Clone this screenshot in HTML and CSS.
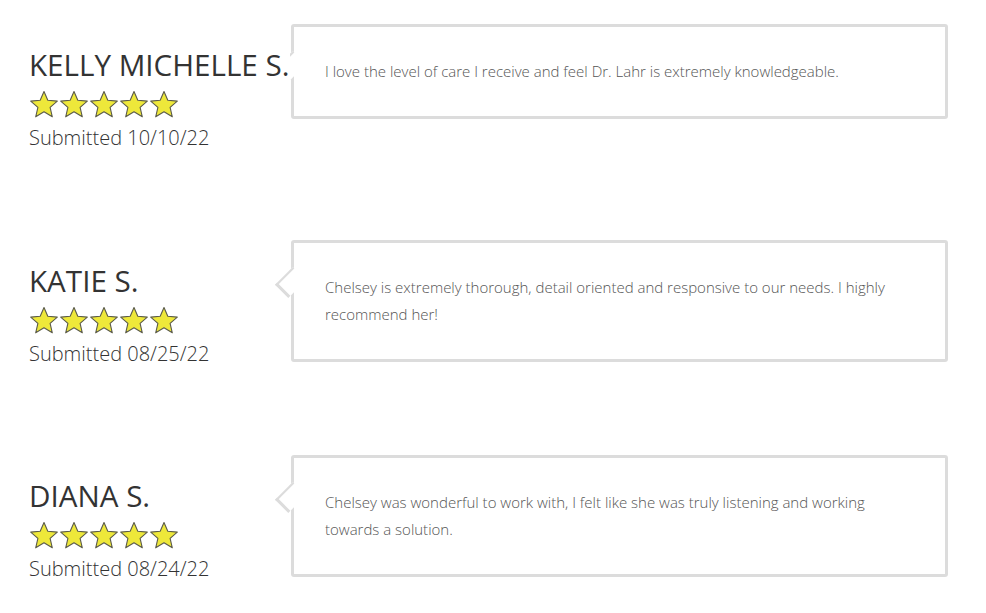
FILE: index.html
```html
<!DOCTYPE html>
<html>
<head>
<meta charset="utf-8">
<link rel="stylesheet" href="styles.css">
</head>
<body>
<div class="reviews">
  <div class="review">
    <div class="author">
      <div class="name"><span>KELLY MICHELLE S.</span></div>
      <div class="stars">
        <svg viewBox="0 0 30 29" class="star"><path d="M15 1.5 L18.8 10.3 L28.3 11.1 L21.1 17.4 L23.3 26.8 L15 21.8 L6.7 26.8 L8.9 17.4 L1.7 11.1 L11.2 10.3 Z"/></svg>
        <svg viewBox="0 0 30 29" class="star"><path d="M15 1.5 L18.8 10.3 L28.3 11.1 L21.1 17.4 L23.3 26.8 L15 21.8 L6.7 26.8 L8.9 17.4 L1.7 11.1 L11.2 10.3 Z"/></svg>
        <svg viewBox="0 0 30 29" class="star"><path d="M15 1.5 L18.8 10.3 L28.3 11.1 L21.1 17.4 L23.3 26.8 L15 21.8 L6.7 26.8 L8.9 17.4 L1.7 11.1 L11.2 10.3 Z"/></svg>
        <svg viewBox="0 0 30 29" class="star"><path d="M15 1.5 L18.8 10.3 L28.3 11.1 L21.1 17.4 L23.3 26.8 L15 21.8 L6.7 26.8 L8.9 17.4 L1.7 11.1 L11.2 10.3 Z"/></svg>
        <svg viewBox="0 0 30 29" class="star"><path d="M15 1.5 L18.8 10.3 L28.3 11.1 L21.1 17.4 L23.3 26.8 L15 21.8 L6.7 26.8 L8.9 17.4 L1.7 11.1 L11.2 10.3 Z"/></svg>
      </div>
      <div class="date">Submitted 10/10/22</div>
    </div>
    <div class="bubble">
      <p>I love the level of care I receive and feel Dr. Lahr is extremely knowledgeable.</p>
    </div>
  </div>
  <div class="review">
    <div class="author">
      <div class="name"><span>KATIE S.</span></div>
      <div class="stars">
        <svg viewBox="0 0 30 29" class="star"><path d="M15 1.5 L18.8 10.3 L28.3 11.1 L21.1 17.4 L23.3 26.8 L15 21.8 L6.7 26.8 L8.9 17.4 L1.7 11.1 L11.2 10.3 Z"/></svg>
        <svg viewBox="0 0 30 29" class="star"><path d="M15 1.5 L18.8 10.3 L28.3 11.1 L21.1 17.4 L23.3 26.8 L15 21.8 L6.7 26.8 L8.9 17.4 L1.7 11.1 L11.2 10.3 Z"/></svg>
        <svg viewBox="0 0 30 29" class="star"><path d="M15 1.5 L18.8 10.3 L28.3 11.1 L21.1 17.4 L23.3 26.8 L15 21.8 L6.7 26.8 L8.9 17.4 L1.7 11.1 L11.2 10.3 Z"/></svg>
        <svg viewBox="0 0 30 29" class="star"><path d="M15 1.5 L18.8 10.3 L28.3 11.1 L21.1 17.4 L23.3 26.8 L15 21.8 L6.7 26.8 L8.9 17.4 L1.7 11.1 L11.2 10.3 Z"/></svg>
        <svg viewBox="0 0 30 29" class="star"><path d="M15 1.5 L18.8 10.3 L28.3 11.1 L21.1 17.4 L23.3 26.8 L15 21.8 L6.7 26.8 L8.9 17.4 L1.7 11.1 L11.2 10.3 Z"/></svg>
      </div>
      <div class="date">Submitted 08/25/22</div>
    </div>
    <div class="bubble">
      <p>Chelsey is extremely thorough, detail oriented and responsive to our needs. I highly recommend her!</p>
    </div>
  </div>
  <div class="review">
    <div class="author">
      <div class="name"><span>DIANA S.</span></div>
      <div class="stars">
        <svg viewBox="0 0 30 29" class="star"><path d="M15 1.5 L18.8 10.3 L28.3 11.1 L21.1 17.4 L23.3 26.8 L15 21.8 L6.7 26.8 L8.9 17.4 L1.7 11.1 L11.2 10.3 Z"/></svg>
        <svg viewBox="0 0 30 29" class="star"><path d="M15 1.5 L18.8 10.3 L28.3 11.1 L21.1 17.4 L23.3 26.8 L15 21.8 L6.7 26.8 L8.9 17.4 L1.7 11.1 L11.2 10.3 Z"/></svg>
        <svg viewBox="0 0 30 29" class="star"><path d="M15 1.5 L18.8 10.3 L28.3 11.1 L21.1 17.4 L23.3 26.8 L15 21.8 L6.7 26.8 L8.9 17.4 L1.7 11.1 L11.2 10.3 Z"/></svg>
        <svg viewBox="0 0 30 29" class="star"><path d="M15 1.5 L18.8 10.3 L28.3 11.1 L21.1 17.4 L23.3 26.8 L15 21.8 L6.7 26.8 L8.9 17.4 L1.7 11.1 L11.2 10.3 Z"/></svg>
        <svg viewBox="0 0 30 29" class="star"><path d="M15 1.5 L18.8 10.3 L28.3 11.1 L21.1 17.4 L23.3 26.8 L15 21.8 L6.7 26.8 L8.9 17.4 L1.7 11.1 L11.2 10.3 Z"/></svg>
      </div>
      <div class="date">Submitted 08/24/22</div>
    </div>
    <div class="bubble">
      <p>Chelsey was wonderful to work with, I felt like she was truly listening and working towards a solution.</p>
    </div>
  </div>
</div>
</body>
</html>
```

FILE: styles.css
```css
html, body {
  margin: 0;
  padding: 0;
  background: #fff;
}
body {
  font-family: "Open Sans", "Liberation Sans", sans-serif;
  color: #333;
}
.reviews {
  display: flex;
  flex-direction: column;
  padding: 24px 0 0 29px;
}
.review {
  display: flex;
  height: 215.5px;
  align-items: flex-start;
}
.author {
  width: 262px;
  flex: none;
  white-space: nowrap;
  overflow-x: clip;
  margin-top: 20px;
}
.name {
  font-size: 29.6px;
  line-height: 42px;
  color: #333;
}
.name span {
  position: relative;
  z-index: 1;
  background: #fff;
}
.stars {
  display: flex;
  margin-top: 4px;
  height: 29px;
}
.star {
  width: 30px;
  height: 29px;
  display: block;
}
.star path {
  fill: #eee83a;
  stroke: #5a5a4a;
  stroke-width: 1.1;
  stroke-linejoin: round;
}
.date {
  font-size: 20px;
  line-height: 28px;
  font-weight: 300;
  margin-top: 5px;
  color: #333;
}
.bubble {
  position: relative;
  width: 657px;
  flex: none;
  box-sizing: border-box;
  border: 3px solid #dcdcdc;
  border-radius: 3px;
  background: #fff;
  padding: 31px 30px 31px 31px;
}
.bubble::before {
  content: "";
  position: absolute;
  z-index: 0;
  left: -16px;
  top: 27px;
  width: 22px;
  height: 22px;
  background: #fff;
  border-left: 3px solid #dcdcdc;
  border-bottom: 3px solid #dcdcdc;
  transform: rotate(45deg) scaleX(0.75);
  transform-origin: center;
}
.bubble p {
  margin: 0;
  font-size: 15px;
  line-height: 27px;
  font-weight: 300;
  color: #555;
}
```
